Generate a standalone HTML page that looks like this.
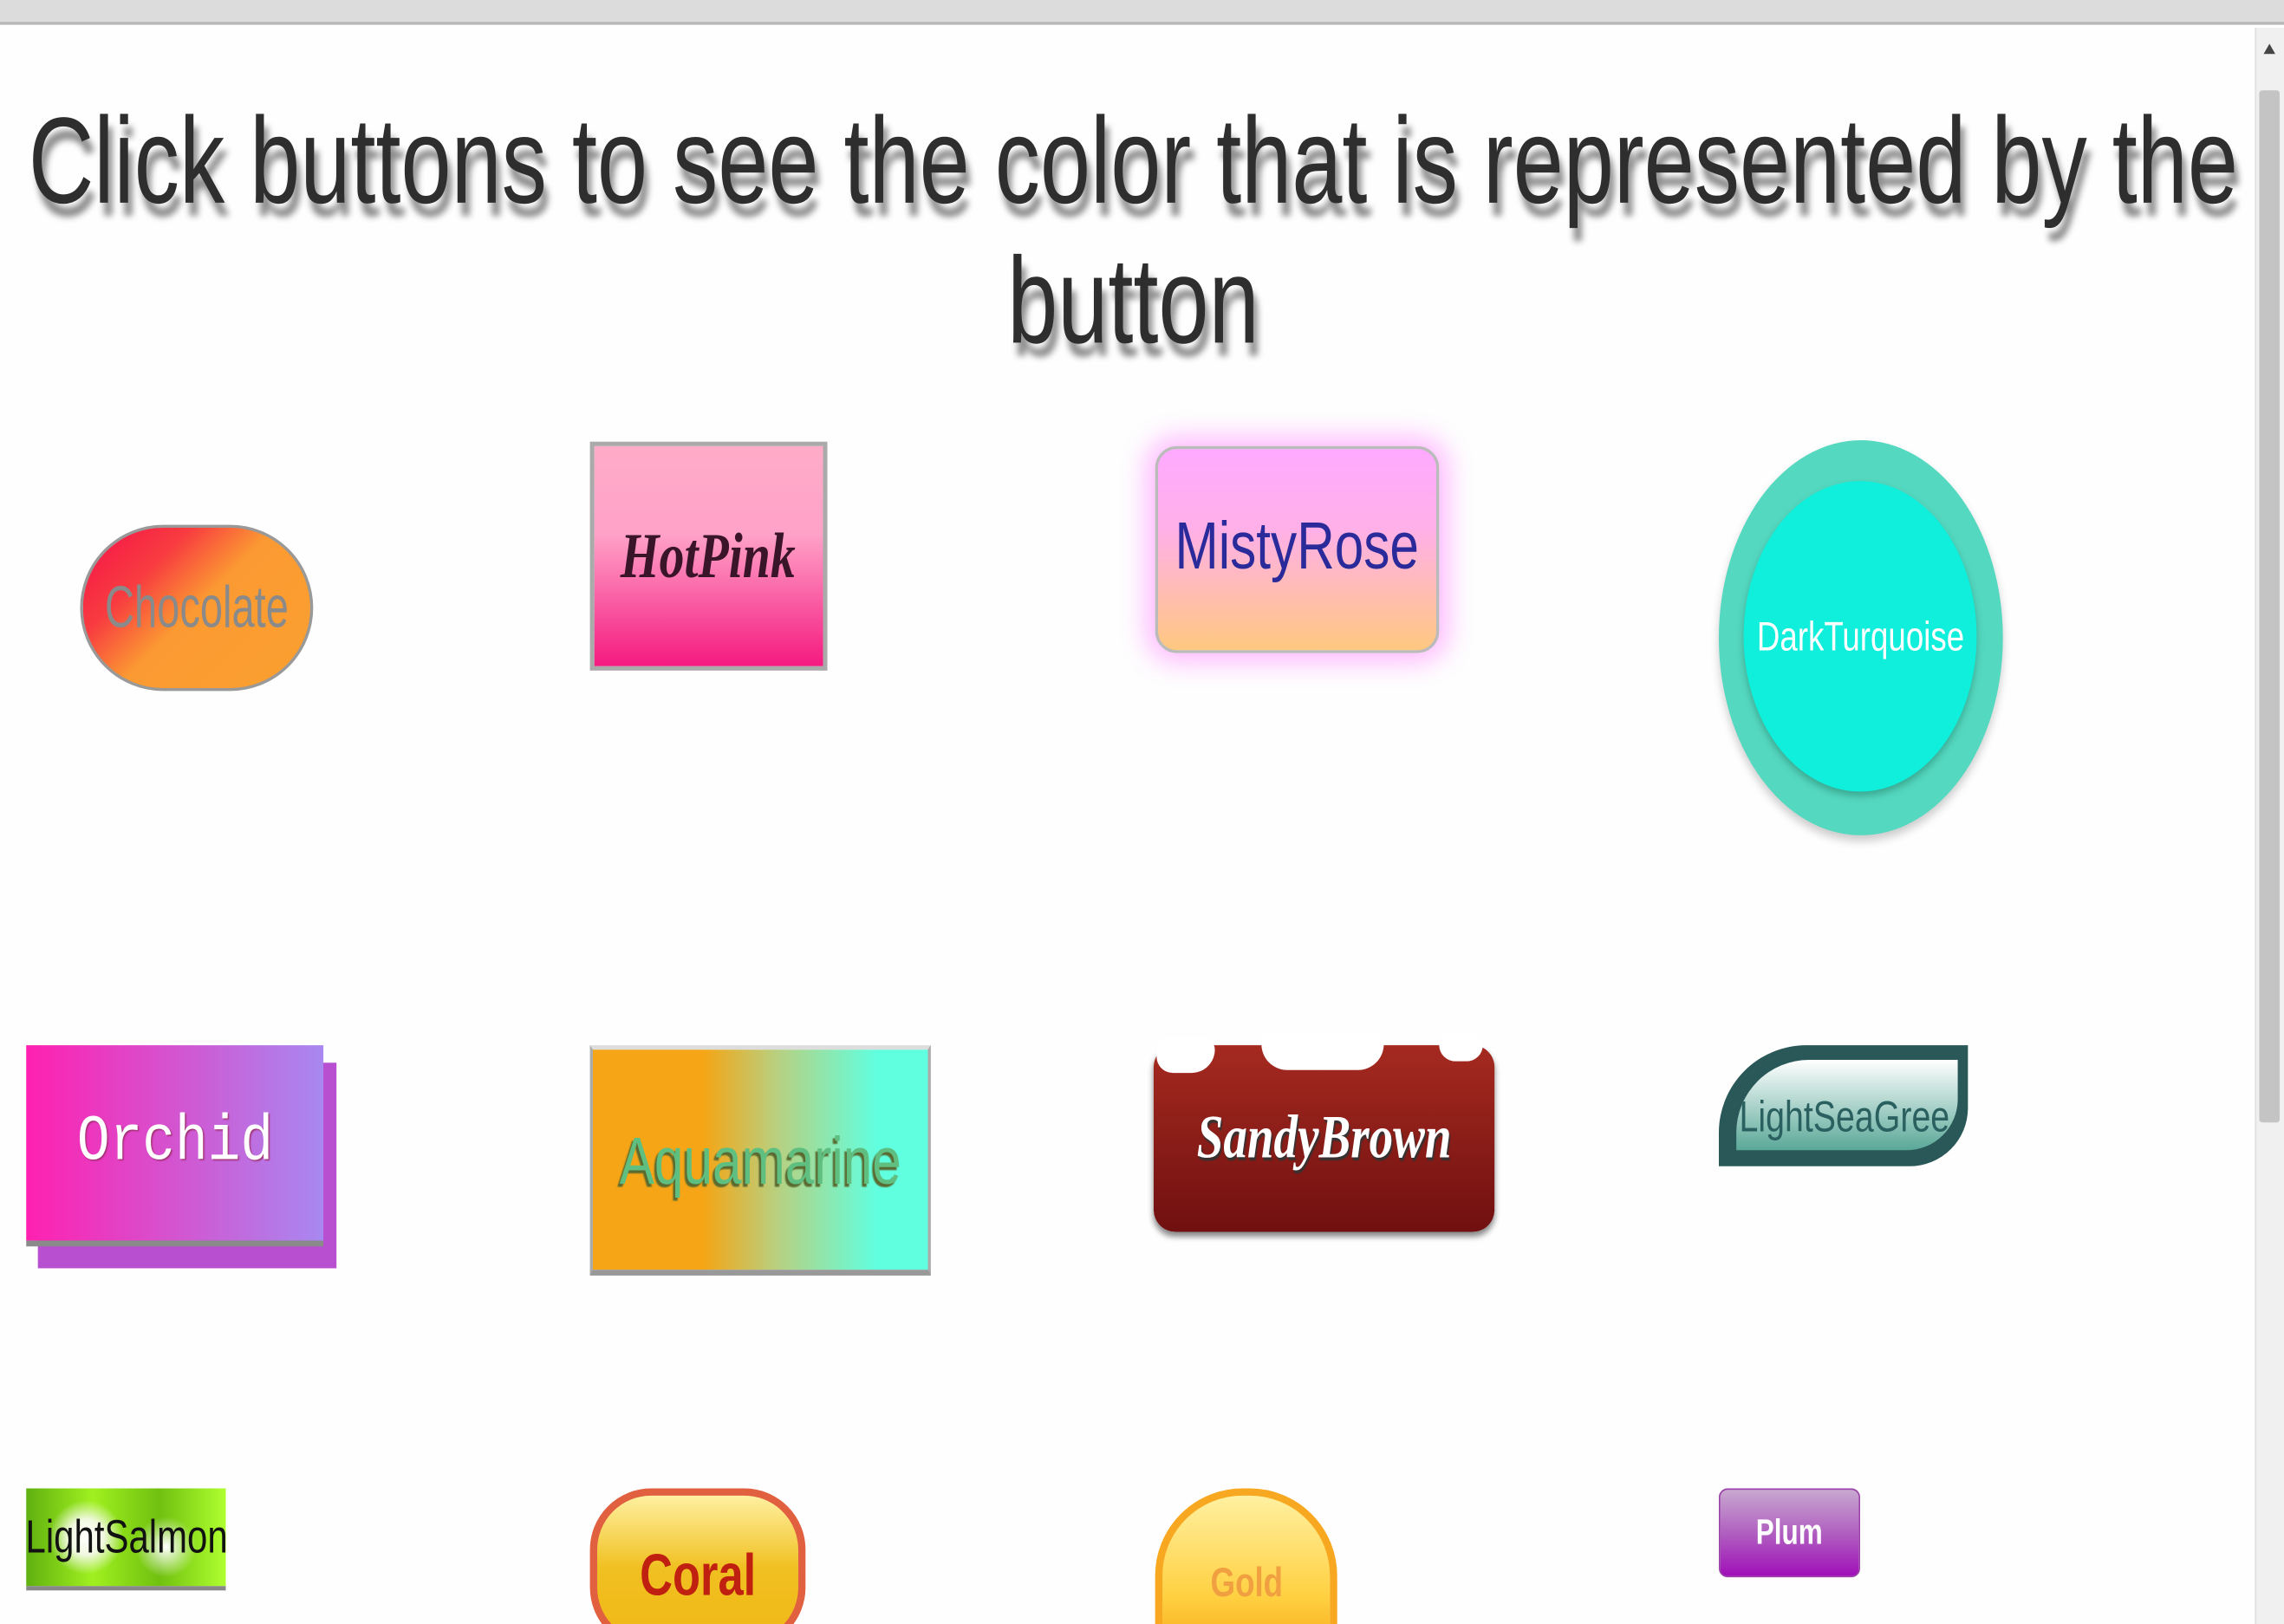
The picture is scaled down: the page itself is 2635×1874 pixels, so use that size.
<!DOCTYPE html>
<html><head><meta charset="utf-8"><style>
html,body{margin:0;padding:0;background:#fff;overflow:hidden;}
#wrap{position:absolute;left:0;top:0;width:1568px;height:1114px;transform:scale(1.6805,1.6822);transform-origin:0 0;background:#fefefe;overflow:hidden;font-family:"Liberation Sans",sans-serif;}
.abs{position:absolute;box-sizing:border-box;}
.c{display:flex;align-items:center;justify-content:center;white-space:nowrap;}
.h{position:absolute;left:778px;color:#2e2e2e;font-size:84px;text-shadow:4px 9px 5px #8a8a8a;white-space:nowrap;transform:translateX(-50%) scaleX(0.74);}
.n{display:inline-block;transform:scaleX(0.78);}
</style></head><body><div id="wrap">
<div class="abs" style="left:0;top:0;width:1568px;height:17px;background:#dcdcdc;border-bottom:2px solid #b8b8b8"></div>
<div class="abs" style="left:1548px;top:19px;width:20px;height:1095px;background:#f0f0f0;border-left:1px solid #e0e0e0"></div>
<div class="abs" style="left:1551px;top:62px;width:14px;height:708px;background:#c4c4c4;border-radius:2px"></div>
<div class="abs" style="left:1554px;top:30px;width:0;height:0;border-left:4px solid transparent;border-right:4px solid transparent;border-bottom:7px solid #444"></div>

<div class="h" style="top:62px">Click buttons to see the color that is represented by the</div>
<div class="h" style="top:158px">button</div>

<!-- Row 1 -->
<div class="abs c" style="left:55px;top:360px;width:160px;height:114px;border-radius:57px;border:2px solid #999;background:linear-gradient(135deg,#f5104a 0%,#f83c40 28%,#fb9a32 50%,#fba030 100%);color:#8a8a8a;font-size:40px"><span class="n" style="transform:scaleX(0.7)">Chocolate</span></div>

<div class="abs c" style="left:405px;top:303px;width:163px;height:157px;border:3px solid #aaa;background:linear-gradient(#ffacc8 0%,#ffa2c8 40%,#f51a80 100%);color:#3a1428;font-size:44px;font-weight:bold;font-style:italic;font-family:'Liberation Serif',serif"><span class="n">HotPink</span></div>

<div class="abs c" style="left:793px;top:306px;width:195px;height:142px;border-radius:15px;border:2px solid #bbb;background:linear-gradient(#ffaaff 0%,#ffb0e8 40%,#ffc880 100%);box-shadow:0 0 18px 6px #ffb8ff;color:#2a2a9a;font-size:46px;padding-bottom:6px"><span class="n">MistyRose</span></div>

<div class="abs" style="left:1180px;top:302px;width:195px;height:271px;border-radius:50%;background:#55d8c0;box-shadow:0 4px 6px #ccc"></div>
<div class="abs c" style="left:1197px;top:330px;width:160px;height:213px;border-radius:50%;background:#10eedc;box-shadow:0 3px 5px #3aa890;color:#fff;font-size:28px"><span class="n">DarkTurquoise</span></div>

<!-- Row 2 -->
<div class="abs" style="left:26px;top:729px;width:205px;height:141px;background:#b84fd0"></div>
<div class="abs c" style="left:18px;top:717px;width:204px;height:138px;border-bottom:4px solid #8a8a8a;background:linear-gradient(90deg,#ff20b0,#a888f0);color:#fff;font-size:44px;font-family:'Liberation Mono',monospace;text-shadow:1px 1px 1px #a03070"><span style="display:inline-block;transform:scaleX(0.85)">Orchid</span></div>

<div class="abs c" style="left:405px;top:717px;width:234px;height:158px;border:2px solid #aaa;border-top:3px solid #ddd;border-bottom:4px solid #999;background:linear-gradient(90deg,#f5a515 0%,#f5a515 33%,#b8d080 55%,#60ffe0 85%);color:#5fbf80;font-size:46px;text-shadow:-2px 2px 1px #5a6a30"><span class="n">Aquamarine</span></div>

<div class="abs c" style="left:792px;top:717px;width:234px;height:128px;border-radius:15px;background:linear-gradient(#a52a20,#701010);box-shadow:0 3px 4px #888;color:#fff;font-size:42px;font-weight:bold;font-style:italic;font-family:'Liberation Serif',serif;text-shadow:1px 2px 1px #333"><span class="n">SandyBrown</span></div>
<div class="abs" style="left:794px;top:712px;width:40px;height:24px;background:#fff;border-radius:10px 10px 20px 14px"></div>
<div class="abs" style="left:866px;top:708px;width:84px;height:26px;background:#fff;border-radius:14px 14px 30px 30px"></div>
<div class="abs" style="left:988px;top:708px;width:30px;height:20px;background:#fff;border-radius:12px 12px 15px 15px"></div>

<div class="abs" style="left:1180px;top:717px;width:171px;height:83px;background:#2a5858;border-radius:60px 0 40px 0"></div>
<div class="abs c" style="left:1192px;top:727px;width:152px;height:62px;background:linear-gradient(#fff,#5aa898);border-radius:50px 0 35px 0;color:#2a6060;font-size:30px;overflow:hidden;justify-content:flex-start;padding-top:18px"><span class="n" style="transform-origin:left;margin-left:2px">LightSeaGree</span></div>

<!-- Row 3 -->
<div class="abs c" style="left:18px;top:1021px;width:137px;height:70px;border-bottom:3px solid #888;background:radial-gradient(circle at 30% 50%,#fff 0,#f0f8e0 12%,transparent 25%),radial-gradient(circle at 70% 60%,#fff 0,transparent 20%),linear-gradient(90deg,#60b010,#a0f020,#70c010,#b0ff30);color:#111;font-size:32px"><span class="n">LightSalmon</span></div>

<div class="abs c" style="left:405px;top:1021px;width:148px;height:110px;border-radius:42px;border:5px solid #e06040;background:linear-gradient(#fff0a0,#f0c020 50%,#f0b818);color:#c02010;font-size:40px;font-weight:bold;padding-top:10px"><span class="n">Coral</span></div>

<div class="abs c" style="left:793px;top:1021px;width:125px;height:110px;border-radius:60px 60px 0 0;border:5px solid #f8a820;background:linear-gradient(#fff0a0,#ffd040 70%,#f8b020);color:#f0a040;font-size:28px;font-weight:bold;padding-top:20px"><span class="n">Gold</span></div>

<div class="abs c" style="left:1180px;top:1021px;width:97px;height:61px;border-radius:6px;border:1px solid #9a40a8;background:linear-gradient(#c8a8d0,#b060c0 50%,#a010b8);color:#fff;font-size:24px;font-weight:bold"><span class="n">Plum</span></div>
</div></body></html>
